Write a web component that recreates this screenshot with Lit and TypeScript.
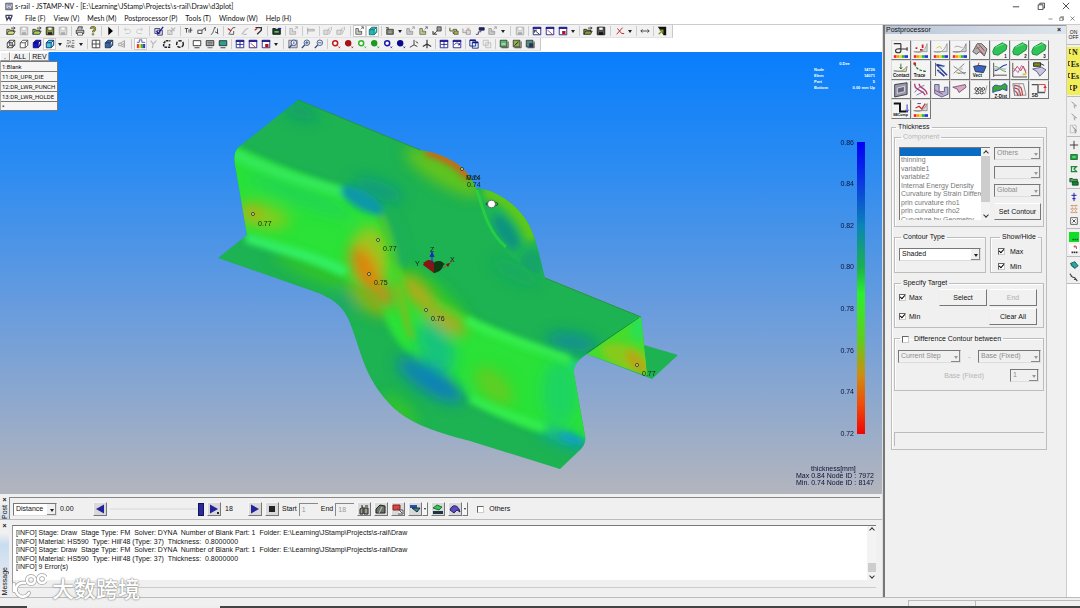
import { LitElement, html, svg, css, TemplateResult } from "lit";
import { customElement, property } from "lit/decorators.js";
import { classMap } from "lit/directives/class-map.js";

type Glyph = TemplateResult;

/* ---------- small 12x12 glyphs used by the tool bars ---------- */
const folder = (f: string, s = "#333") => svg`<path d="M1 10V4h3l1 1h4v2M1 10l2-4h8l-2 4z" fill=${f} stroke=${s}/><path d="M6 2.5h4M9 1l2 1.5L9 4" fill="none" stroke=${s}/>`;
const disk = (a: string, b: string) => svg`<path d="M1.5 1.5h9v9h-9z" fill=${a} stroke=${b}/><path d="M3.5 1.5h5v3.5h-5z" fill="#fff" stroke=${b} stroke-width=".6"/><path d="M3.5 7.5h5v3h-5z" fill=${b}/>`;
const cube = (f: string, s: string) => svg`<path d="M1.5 4.5h6v6h-6zM1.5 4.5l3-3h6l-3 3M10.500 1.500v6l-3 3" fill=${f} stroke=${s} stroke-linejoin="round"/>`;
const axisBall = (c: string, hollow = false) => svg`<circle cx="5" cy="5" r="3" fill=${hollow ? "#fff" : c} stroke=${c} stroke-width="1.800"/><path d="M9 9l2 2M11 9l-2 2" stroke=${c} stroke-width=".8"/>`;
const win = (mark: Glyph) => svg`<path d="M1.500 1.500h9v9h-9z" fill="#fff" stroke="#14148c"/><path d="M1 1.500h10v2H1z" fill="#14148c"/>${mark}`;
const lens = (s: string, mark: string) => svg`<circle cx="7" cy="4.500" r="3.300" fill="#eef" stroke=${s}/><path d="M4.500 7L1 11" stroke=${s} stroke-width="1.600"/><path d=${mark} stroke=${s}/>`;
const parts = (a: string, b: string) => svg`<path d="M1 3v7h7V6M1 3h3v4h4" fill=${a} stroke=${b}/><path d="M7 4l3-3M10 1H7.500M10 1v2.500" fill="none" stroke=${b}/>`;
const twin = (a: string, b: string) => svg`<path d="M1 5h5v5H1z" fill=${a} stroke=${b}/><path d="M8 2l-2 3 3 1-2 4M10 1v4" fill="none" stroke=${b}/>`;
const board = (a: string, extra: Glyph) => svg`<path d="M1.500 1.500h8v8h-8z" fill=${a} stroke="#333"/><path d="M3 10.500h8V3" fill="none" stroke="#333"/>${extra}`;
const curve = (s: string) => svg`<path d="M1 10c3 0 3-6 5-8M5 2h2M6 7l4 2M9 3v6" fill="none" stroke=${s}/>`;

const G: Record<string, Glyph> = {
  open: folder("#d7e27a"), openG: folder("#a9cf5b"), fold2: folder("#8c9a3a", "#222"),
  save: disk("#8a9a30", "#222"), saveOff: disk("#ddd", "#aaa"), saveDark: disk("#555", "#111"),
  print: svg`<path d="M3 4l1-3h5l-1 3M1.500 5h9v4h-9z" fill="#bbb" stroke="#333"/><path d="M3 8h6v3H3z" fill="#fff" stroke="#333" stroke-width=".8"/>`,
  help: svg`<path d="M3.500 3.500c0-3 5-3 5 0 0 2-2.500 2-2.500 4" fill="none" stroke="#443" stroke-width="2.600"/><path d="M3.500 3.500c0-3 5-3 5 0 0 2-2.500 2-2.500 4" fill="none" stroke="#d6d62a" stroke-width="1.200"/><circle cx="6" cy="10" r="1.200" fill="#b9b92a" stroke="#443" stroke-width=".5"/>`,
  play: svg`<path d="M4 1l5.500 5L4 11z" fill="#000"/>`,
  undo: svg`<path d="M3 4h5c3 0 3 5 0 5H4M5 2L2.500 4 5 6" fill="none" stroke="#c4c4c4"/>`,
  redo: svg`<path d="M9 4H4C1 4 1 9 4 9h4M7 2l2.500 2L7 6" fill="none" stroke="#c4c4c4"/>`,
  check: svg`<path d="M1 3h6v6H1zM4 5h6v6H4z" fill="#dde" stroke="#336"/><path d="M3 6l2 3 6-8" fill="none" stroke="#11119a" stroke-width="1.400"/>`,
  checkOff: svg`<path d="M1 5h5v5H1zM5 2l4 4M3 8l7-6" fill="none" stroke="#b5b5b5" stroke-width="1.300"/>`,
  n1: svg`<path d="M1 3h4M3 3v5M6 8V4M7 5h3M8 2v6" fill="none" stroke="#333"/>`,
  n2: svg`<path d="M1 9V5h5v4zM6 5l4-3v4" fill="none" stroke="#333"/>`,
  n3: curve("#333"),
  red1: svg`<path d="M2 10l5-8M7 2h3M3 10h5v-4" fill="none" stroke="#444"/><path d="M1 3l4 3" stroke="#c22" stroke-width="1.500"/>`,
  gray1: svg`<path d="M2 10l5-6 3-1M4 10h4" fill="none" stroke="#bbb" stroke-width="1.300"/>`,
  red2: svg`<path d="M3 2h7v3L5 10" fill="none" stroke="#333" stroke-width="1.600"/><path d="M2 5l3-2" stroke="#c22" stroke-width="1.500"/>`,
  green1: svg`<path d="M1 3h3l1 1h5v6H1z" fill="#2a3a2a" stroke="#111"/><path d="M3 7h5" stroke="#3ddc4a" stroke-width="2"/><path d="M7 3h4" stroke="#22a" stroke-width="1.500"/>`,
  off1: parts("#ddd", "#b0b0b0"), off2: svg`<path d="M2 2v8M2 4h8v2H2z" fill="#ddd" stroke="#aaa"/>`, off3: twin("#ddd", "#b0b0b0"),
  part: parts("#cfd4c4", "#555"), teal: cube("#22b7b7", "#0d6a6a"), mach: svg`<path d="M2 4h8v6H2zM1 2h3v2" fill="#777b62" stroke="#444"/><path d="M4 6h4M4 8h4" stroke="#ddd" stroke-width=".6"/>`,
  offParts: parts("#ccc", "#999"), oliv: parts("#c8d08a", "#666"), blk: svg`<path d="M6 1h5v5H6zM2 10l5-5M1 6v4h5" fill="#999" stroke="#444"/>`,
  yel: svg`<path d="M1 2v4h4V4h4v5H5V7" fill="#e5e27a" stroke="#444"/><path d="M6 6h5v4H6z" fill="#a3b04a" stroke="#444" stroke-width=".8"/>`,
  pink: svg`<path d="M1 3v5h5M5 5h5v5H5z" fill="#ddd" stroke="#999"/><path d="M6 2l3 3M9 2L6 5" stroke="#e08a8a"/>`,
  navy: svg`<path d="M5 2h6v3H5z" fill="#22228c" stroke="#223"/><path d="M1 10h3V7h3V5" fill="none" stroke="#335"/>`,
  winA: win(svg`<path d="M3 5l6 5M3 5h3M3 5v3" stroke="#222" fill="none"/>`),
  winB: win(svg`<path d="M3 5l6 5" stroke="#a33" fill="none"/>`),
  winC: win(svg`<path d="M5 6h4v4H5z" fill="#b11"/>`),
  winD: win(svg`<path d="M6 3v7M2 6.500h8" stroke="#14148c"/>`),
  winE: win(svg`<path d="M3 7c1-3 5-3 6 0M9 7V5M9 7H7" stroke="#14148c" fill="none"/>`),
  winF: svg`<path d="M1 1.500h7v7H1zM4 4h7v7H4z" fill="#dfe" stroke="#14148c"/><path d="M1 1.500h7M4 4h7" stroke="#14148c" stroke-width="2"/>`,
  winOff: svg`<path d="M1.500 1.500h6v6h-6zM4.500 4.500h6v6h-6z" fill="#eee" stroke="#bbb"/>`,
  redx: svg`<path d="M2 10l7-8M3 3l5 6M8 9h3" stroke="#c03030" stroke-width="1.200"/>`,
  lr: svg`<path d="M1 6h10M3 4L1 6l2 2M9 4l2 2-2 2" fill="none" stroke="#333"/>`,
  corner: svg`<path d="M1 1h10v10H8z" fill="#111"/><path d="M2 10l5-5M7 9V5H3" fill="none" stroke="#8a9a20" stroke-width="1.600"/>`,
  wire: svg`${cube("none", "#333")}<path d="M4.500 1.500v6h6M4.500 7.500l-3 3" fill="none" stroke="#333"/>`, wire2: cube("#fff", "#444"), blueCube: cube("#1414c8", "#08086a"), tealOn: cube("#3fd0cf", "#127"),
  slate: cube("#3a64a0", "#1c2f55"),
  sys: svg`<path d="M1 2h3M5 2v3M7 2h3M1 5h3M7 5h3M1 10V7M3 10V8h2v2M7 7v3h3M7 8h3" fill="none" stroke="#444" stroke-width=".9"/>`,
  grid: svg`<path d="M1.500 1.500h9v9h-9zM6 1v10M1 6h10" fill="#fff" stroke="#333"/>`,
  spk: svg`<path d="M2 5h2l5-3v8L4 8H2zM4 5l5 3M4 8l5-3" fill="none" stroke="#999"/>`,
  rainbow: svg`<path d="M1 6h2.500v5H1z" fill="#e33"/><path d="M3.500 6H6v5H3.500z" fill="#ec3"/><path d="M6 6h2.500v5H6z" fill="#3b4"/><path d="M8.500 6H11v5H8.500z" fill="#33d"/><path d="M1 4h3V1h3v3h4" fill="none" stroke="#44a"/>`,
  yoff: svg`<path d="M2 2l3 4 4-4M5 6l-1 5" fill="none" stroke="#b5b5b5" stroke-width="1.300"/>`,
  frame1: svg`<path d="M2 9V5l3-3h5M3 10h6V6" fill="none" stroke="#222" stroke-width="1.800" stroke-dasharray="3 1"/>`,
  frame2: svg`<circle cx="6" cy="6" r="4" fill="none" stroke="#222" stroke-width="1.800" stroke-dasharray="4 1.500"/>`,
  mon1: svg`<path d="M1.500 2h9v6h-9z" fill="#fff" stroke="#222"/><path d="M3 10.500h6" stroke="#222"/>`,
  mon2: svg`<path d="M1.500 2h9v6h-9z" fill="#bbb" stroke="#222"/><path d="M3 4h6M3 6h6M3 10.500h6" stroke="#555"/>`,
  mon3: svg`<path d="M1.500 2h9v6h-9z" fill="#29a08a" stroke="#223"/><path d="M3 10.500h6" stroke="#222"/>`,
  zoomA: svg`<path d="M1 1.500h10v9H1z" fill="#ccd" stroke="#667"/>${lens("#2a4a7a", "M7 3v3")}`,
  zoomP: lens("#2a4a7a", "M5 4.500h4M7 2.500v4"), zoomM: lens("#2a4a7a", "M5 4.500h4"),
  r1: axisBall("#c01818", true), r2: axisBall("#a81414"), g1: axisBall("#2ab52a", true), g2: axisBall("#1c9a1c"), b1: axisBall("#1818b0", true), b2: axisBall("#0c0c8a"),
  ax1: svg`<path d="M6 1v6L1 10M6 7l4 2M8 3l3 2" fill="none" stroke="#444" stroke-width="1.200"/>`,
  ax2: svg`<path d="M6 1v10M6 6L1 9M6 6l5 3" fill="none" stroke="#333" stroke-width="1.400"/>`,
  bd1: board("#59b76a", svg`<path d="M3 6h5" stroke="#fff"/>`),
  bd2: board("#8fae4a", svg`<path d="M3 8l5-5" stroke="#111"/>`),
  bd3: board("#4f8d86", svg`<path d="M5 5h5v5H5z" fill="#235"/>`),
  cur: svg`<path d="M3 2l6 5H6l1 3" fill="#ddd" stroke="#999"/>`,
  curBox: svg`<path d="M1.500 1.500h7v9h-7z" fill="#eee" stroke="#bbb"/><path d="M4 3l5 5H7l1 3" fill="#ccc" stroke="#888"/>`,
  plus: svg`<path d="M6 1v10M1 6h10" stroke="#222"/>`,
  gr1: svg`<path d="M2 3h8v6H2z" fill="#21a63c" stroke="#156b2a"/><path d="M4 6h4" stroke="#bfe"/>`,
  gr2: svg`<path d="M2 3h8M2 9h8M3 3v6M9 3L6 6l3 3" fill="none" stroke="#1b8a35" stroke-width="1.500"/>`,
  gr3: svg`<path d="M1 3h3l1 1h5v3H1z" fill="#4a5" stroke="#142"/><path d="M4 7h7v4H4z" fill="#183" stroke="#142"/>`,
  pin: svg`<path d="M6 1v10M3 4h6M4 8h4" stroke="#22a" stroke-width="1.200"/>`,
  rgrid: svg`<path d="M2 2h8M2 6h8M2 10h8" stroke="#c66" stroke-dasharray="2 1"/><path d="M4 1v10M8 1v10" stroke="#c93" stroke-dasharray="2 1"/>`,
  xb: svg`<path d="M2 2h8v8H2z" fill="#fff" stroke="#444"/><path d="M4 4l4 4M8 4L4 8" stroke="#333"/>`,
  lime: svg`<path d="M0 0h12v12H0z" fill="#10e020"/><path d="M4 9h7" stroke="#064" stroke-width="2" stroke-dasharray="2 .6"/>`,
  rback: svg`<path d="M0 0h12v12H0z" fill="#fff"/><path d="M8 1L6 3l2 2M6 3h3v3" fill="none" stroke="#c44"/><path d="M3 10h8" stroke="#333" stroke-width="2" stroke-dasharray="2 .6"/>`,
  tealB: svg`<path d="M2 4l5-2 4 5-4 3z" fill="#2aa5a5" stroke="#155"/><path d="M2 4l1 3 4 3" fill="#1b7" stroke="#155"/>`,
  sprl: svg`<path d="M1 2l3 4 3 1 3 4M2 5h2M6 9h2" fill="none" stroke="#444" stroke-width="1.300"/>`,
};

@customElement("tool-strip")
export class ToolStrip extends LitElement {
  @property() items = "";
  @property() label = "";
  static styles = css`
    :host { display: flex; }
    .strip { display: flex; align-items: center; height: 13px; padding: 0 4px; background: #f1f1f1; border-right: 1px solid #c9c9c9; border-bottom: 1px solid #e2e2e2; box-sizing: border-box; }
    button { all: unset; width: 13px; height: 12px; display: grid; place-items: center; }
    button.on { background: #fff; box-shadow: inset 0 0 0 1px #ccc; }
    svg { width: 10px; height: 10px; display: block; }
    .sep, .grip { width: 4px; height: 10px; box-sizing: border-box; background: linear-gradient(#ccc, #ccc) center / 1px 10px no-repeat; }
    .grip { width: 6px; }
    .more { width: 8px; }
    .more::before { content: ""; border: 2px solid transparent; border-top: 3px solid #222; border-bottom: 0; }
  `;
  render() {
    return html`<div class="strip" role="toolbar" aria-label=${this.label}>
      ${this.items.split(" ").map((k) =>
        k === "|" ? html`<span class="sep"></span>`
        : k === "||" ? html`<span class="grip"></span>`
        : k === "v" ? html`<button class="more" aria-label="More"></button>`
        : html`<button class=${classMap({ on: k.startsWith("*") })} aria-label=${k.replace("*", "")}><svg viewBox="0 0 12 12">${G[k.replace("*", "")]}</svg></button>`)}
    </div>`;
  }
}

/* ---------- 20x20 glyphs of the postprocessor palette ---------- */
const bar = svg`<path d="M2 16h3v3H2z" fill="#e22"/><path d="M5 16h3v3H5z" fill="#f90"/><path d="M8 16h3v3H8z" fill="#dd2"/><path d="M11 16h3v3h-3z" fill="#2b3"/><path d="M14 16h4v3h-4z" fill="#23d"/>`;
const cap = (t: string, x = 1, y = 18, cls = "cap") => svg`<text x=${x} y=${y} class=${cls}>${t}</text>`;
const slab = (n: string) => svg`<path d="M2 12l2-5 9-5 5 3-1 5-9 6-5-1z" fill="#2fc455" stroke="#15803a"/><path d="M5 7l10-4" stroke="#7be796"/>${cap(n, 15, 19)}`;
const P: Glyph[] = [
  svg`<path d="M2 3h8M10 3v8c0 3-6 3-6 0s4-2 9-2h4M17 7v4" fill="none" stroke="#333" stroke-width="1.300"/>${bar}`,
  svg`<path d="M2 12c7 2 12 1 15-9v9z" fill="#ddd" stroke="#999"/><path d="M4 8h2M9 10h3M12 4v4" stroke="#c22" stroke-width="2"/>${bar}`,
  svg`<path d="M2 12c8 2 11 0 15-9v9z" fill="#e8e8e8" stroke="#999"/><path d="M5 8l4-2 2 3" fill="none" stroke="#cc3"/>${bar}`,
  svg`<path d="M2 12c8 2 11 0 15-9v9z" fill="#d4d4dc" stroke="#888"/><path d="M4 7c4-3 6 1 9 0" fill="none" stroke="#999"/>${bar}`,
  svg`<path d="M2 12l5-9h5l6 6-3 8-5-5-4 3z" fill="#b9a9b0" stroke="#555"/><path d="M6 6l8 9M9 4l6 7" stroke="#a33"/><path d="M5 9l5-2" stroke="#3a6"/>`,
  slab("1"), slab("2"), slab("3"),
  svg`<path d="M2 11c7 2 11 0 15-5l-1 6z" fill="#dde08a" stroke="#888"/><path d="M10 3v6M8.500 7l1.500 2 1.500-2" fill="none" stroke="#262"/>${cap("Contact")}`,
  svg`<path d="M3 3c2 7 7 8 14 9" fill="none" stroke="#2a6a2a" stroke-width="1.500" stroke-dasharray="3 1.500"/><circle cx="3" cy="3" r="1.600" fill="#c22"/>${cap("Trace", 2)}`,
  svg`<path d="M4 2v15" stroke="#555"/><path d="M5 4l12 12M6 10l8 7M5 4l9 2" stroke="#2a3a9a" stroke-width="1.800"/><path d="M8 7l6-2M7 13l5-6" stroke="#8ab"/>`,
  svg`<path d="M3 14L15 3M3 6l13 9M8 14l9-1" stroke="#777"/><path d="M5 9l8-2v3z" fill="#ccc"/><path d="M6 13l4 1" stroke="#994"/>`,
  svg`<path d="M3 6l6-1 8 1-3 7-9-1z" fill="#3b63c0" stroke="#234"/><path d="M9 2l-1 3" stroke="#c22"/>${cap("Vect", 2)}`,
  svg`<path d="M3 2v16M3 16h15" stroke="#444"/><path d="M4 11c5 0 6-6 14-7" fill="none" stroke="#24a" stroke-width="1.300"/><path d="M4 6c5 0 8 6 13 6" fill="none" stroke="#4a4"/><path d="M3 9h14" stroke="#999"/>`,
  svg`<path d="M2 2v16h16" fill="none" stroke="#444"/><path d="M3 12l4-6 4 5 3-5 3 8" fill="none" stroke="#c33"/><path d="M3 8l5 5 4-8 5 6" fill="none" stroke="#a5a"/><path d="M13 15h4" stroke="#cc3" stroke-width="2"/>`,
  svg`<path d="M3 9l10-2 5 3-7 7-3-5z" fill="#cbc6e0" stroke="#558"/><path d="M4 2h8v4H4z" fill="#7a8a1a" stroke="#222"/><path d="M12 3l4 2" stroke="#222"/>`,
  svg`<path d="M3 4l14-2v13L3 18z" fill="#99a" stroke="#334"/><path d="M6 8l8-2v6l-8 2z" fill="#667" stroke="#dde"/>`,
  svg`<path d="M3 3c0 9 8 5 12 13M8 3c0 6 8 4 9 12" fill="none" stroke="#b33a6a" stroke-width="1.500"/><path d="M3 13c3-5 7-7 11-8M5 16l8-4" fill="none" stroke="#6a6ab5"/>`,
  svg`<path d="M3 4h5v8h6V7h4v8l-7 3-8-4z" fill="#b7b6d0" stroke="#558"/><path d="M3 10l9 5" stroke="#b35"/>`,
  svg`<path d="M2 7l14-3 1 3-8 6-2-4z" fill="#d9a9bd" stroke="#757"/>`,
  svg`<path d="M3 14h13l2-9" fill="none" stroke="#999"/><g fill="#fff" stroke="#333"><circle cx="6" cy="9" r="1.600"/><circle cx="10" cy="9" r="1.600"/><circle cx="7" cy="13" r="1.600"/><circle cx="12" cy="13" r="1.600"/><circle cx="14" cy="9" r="1.600"/></g>`,
  svg`<path d="M2 7c3-5 7 0 10-2s4-3 6 0v6l-5-2c-4 3-6 1-11 4z" fill="#3aa53a" stroke="#264a9a"/>${cap("Z-Dist", 4, 19)}`,
  svg`<path d="M2 3h12l3 13H4z" fill="#eee" stroke="#888"/><path d="M3 5c9 0 9 3 10 11M3 8c6 0 7 3 8 9M3 11c4 0 4 3 5 6" fill="none" stroke="#c23a3a" stroke-width="1.300"/><path d="M4 4v13M9 4v13" stroke="#88a"/>`,
  svg`<path d="M2 4h7v9h8" fill="none" stroke="#555" stroke-width="1.500"/><path d="M10 4h7v8" fill="none" stroke="#c33"/><path d="M15 8l2-3 2 3" fill="#c33"/>${cap("SB", 2)}`,
  svg`<path d="M2 4h7v9h7" fill="none" stroke="#111" stroke-width="2.200"/><path d="M17 5v8M15.500 11l1.500 3 1.500-3" fill="none" stroke="#22a"/>${cap("SBComp", 1, 18, "cap tiny")}`,
  svg`<path d="M2 12c8 2 11 0 15-8v8z" fill="#ddd" stroke="#888"/><path d="M4 9l4-2 3 3 4-6" fill="none" stroke="#c33" stroke-width="1.500"/><path d="M6 4h4" stroke="#33a"/>${bar}`,
];

/* ---------- shaded forming result ---------- */
const BODY = "M298 100L420 150C445 154 460 164 467 173C473 181 476 188 479 192C498 193 521 210 529 225C537 240 541 264 545 278L641 317L644 345L678 355L652 379L587 354C578 360 573 365 574 374L585 436C586 442 584 445 581 449L560 469L470 441C430 431 405 421 388 402C366 378 362 356 354 334C346 307 336 299 310 290L218 258L247 235L236 170C233 156 235 150 240 146Z";
const WALL = "M220 146L240 148C262 160 330 186 352 193C378 202 383 226 388 248C393 266 406 281 430 296C470 322 530 344 574 362L600 366L600 444L585 441C560 444 500 420 452 386C410 358 392 345 380 304C370 288 350 280 310 262L246 236L215 232Z";
const pins: [number, number, string, number, number][] = [
  [253, 214, "0.77", 258, 226], [378, 240, "0.77", 383, 251], [369, 274, "0.75", 374, 285],
  [426, 310, "0.76", 431, 321], [462, 169, "0.74", 467, 180], [637, 365, "0.77", 642, 376],
];

@customElement("result-view")
export class ResultView extends LitElement {
  static styles = css`
    :host { display: block; position: relative; min-height: 0; overflow: hidden; background: linear-gradient(#087efc, #2a8bf2 25%, #6c9ddc 60%, #b3b5bd 100%); font-family: "Liberation Sans", sans-serif; }
    .scene { position: absolute; inset: 0; width: 100%; height: 100%; }
    text { font-size: 7px; fill: #10201a; }
    .ink { fill: #0c1238; }
    .info { position: absolute; top: 9px; right: 7px; width: 61px; display: grid; grid-template-columns: 1fr auto; color: #fff; font-size: 4px; font-weight: bold; line-height: 6px; margin: 0; }
    .info dd { margin: 0; text-align: right; }
    .info .head { grid-column: 1 / 3; text-align: center; }
    .parts { position: absolute; top: 0; left: 0; width: 58px; display: grid; grid-template-columns: 10px 20px 19px; font-size: 7px; }
    .parts button { all: unset; box-sizing: border-box; height: 9px; line-height: 8px; text-align: center; background: #f0f0f0; border: 1px solid #999; border-top-color: #fff; border-left-color: #fff; }
    .parts ul { grid-column: 1 / 4; list-style: none; margin: 0; padding: 0; width: 58px; background: #f6f6f6; border: 1px solid #777; border-left-color: #aaa; box-sizing: border-box; overflow: hidden; }
    .parts li { height: 10px; line-height: 9px; box-sizing: border-box; border-bottom: 1px solid #777; white-space: nowrap; font-family: Roboto, sans-serif; font-size: 6px; padding-left: 1px; }
    .parts li:last-child { border: 0; height: 8px; }
  `;
  render() {
    const blob = (cx: number, cy: number, rx: number, ry: number, rot: number, c: string, o = 1) =>
      svg`<ellipse cx=${cx} cy=${cy} rx=${rx} ry=${ry} transform=${`rotate(${rot} ${cx} ${cy})`} fill=${c} opacity=${o}/>`;
    return html`
      <svg class="scene" viewBox="0 52 882 442" preserveAspectRatio="xMidYMid meet" role="img" aria-label="Thickness contour of s-rail">
        <defs>
          <filter id="b3" x="-20%" y="-20%" width="140%" height="140%"><feGaussianBlur stdDeviation="3"/></filter>
          <filter id="b7" x="-20%" y="-20%" width="140%" height="140%"><feGaussianBlur stdDeviation="7"/></filter>
          <clipPath id="body"><path d=${BODY}/></clipPath>
          <clipPath id="inner"><path d="M587 354L637 318L641 317L644 345L647 376Z"/></clipPath>
          <clipPath id="back"><path d="M476 188C500 190 522 210 529 225C537 240 541 264 545 278C520 267 505 252 496 240C486 224 483 205 476 188Z"/></clipPath>
          <linearGradient id="leg" x1="0" y1="0" x2="0" y2="1">
            <stop offset="0" stop-color="#0000f4"/><stop offset=".14" stop-color="#0c3ae0"/><stop offset=".29" stop-color="#0a86b4"/><stop offset=".43" stop-color="#1cb24c"/>
            <stop offset=".52" stop-color="#2cf02c"/><stop offset=".68" stop-color="#62cc1c"/><stop offset=".8" stop-color="#d08c10"/><stop offset=".9" stop-color="#f04c08"/><stop offset="1" stop-color="#f00404"/>
          </linearGradient>
        </defs>
        <path d=${BODY} fill="#1db252"/>
        <g clip-path="url(#body)">
          <g filter="url(#b7)">
            ${blob(300, 112, 18, 6, 20, "#0f9a72")}
            ${blob(444, 172, 44, 13, 30, "#62c41c")}
            ${blob(425, 305, 54, 24, 40, "#2fc82a")}
            ${blob(330, 276, 60, 10, 22, "#32c42c")}
            ${blob(370, 302, 26, 10, 28, "#7ab81a")}
            ${blob(400, 410, 22, 8, 40, "#34c628")}
            ${blob(345, 300, 14, 8, 40, "#12a66c")}
            ${blob(515, 272, 26, 8, 26, "#12a668", 0.7)}
          </g>
          <path d=${WALL} fill="#2ce238" filter="url(#b3)"/>
          <g filter="url(#b7)">
            ${blob(300, 196, 56, 8, 21, "#20d454")}
            ${blob(262, 216, 28, 12, 12, "#7ecf1c")}
            ${blob(252, 212, 12, 8, 12, "#b0b018")}
            ${blob(370, 258, 20, 32, 0, "#98c81c")}
            ${blob(366, 270, 11, 27, -26, "#e08010")}
            ${blob(384, 296, 10, 12, -30, "#c09014")}
            ${blob(418, 293, 10, 24, -44, "#b4a814")}
            ${blob(446, 320, 24, 9, 32, "#b0a818")}
            ${blob(436, 346, 16, 28, -28, "#16c47c")}
            ${blob(430, 380, 38, 13, 32, "#0a86b0")}
            ${blob(436, 384, 18, 8, 32, "#0a80b8")}
            ${blob(494, 386, 13, 24, -44, "#5ece20")}
            ${blob(560, 392, 18, 32, 0, "#1ed462")}
            ${blob(562, 438, 24, 6, 20, "#10a4b4")}
            ${blob(572, 342, 26, 8, 10, "#0a8c98")}
            ${blob(378, 190, 26, 9, 20, "#0f9c80")}
          </g>
          <g filter="url(#b3)">
            <path d="M232 153C280 176 315 184 346 193" fill="none" stroke="#34e85c" stroke-width="10"/>
            ${blob(362, 200, 24, 9, 30, "#0a98a8")}
            <path d="M384 210C400 224 404 246 402 266" fill="none" stroke="#1cb056" stroke-width="14"/>
            <path d="M380 216C390 234 394 262 408 322" fill="none" stroke="#50d024" stroke-width="6"/>
            <path d="M397 286C402 306 404 320 412 338" fill="none" stroke="#80bc1c" stroke-width="5"/>
            <path d="M246 238C290 252 318 258 346 272" fill="none" stroke="#34f068" stroke-width="9"/>
            <path d="M466 320C500 338 535 346 570 360" fill="none" stroke="#38f050" stroke-width="8"/>
            <path d="M470 398C492 410 515 418 545 428" fill="none" stroke="#34ee50" stroke-width="8"/>
            ${blob(576, 366, 7, 5, 0, "#1ad088")}
            ${blob(572, 439, 14, 4, 20, "#109cc8")}
            <path d="M426 151C446 156 460 164 470 178" fill="none" stroke="#d66014" stroke-width="9"/>
          </g>
        </g>
        <g clip-path="url(#back)">
          <path d="M470 180h80v100h-80z" fill="#1db456"/>
          <g filter="url(#b3)">
            <path d="M484 190C512 196 528 222 534 240" fill="none" stroke="#5cc81c" stroke-width="16"/>
            ${blob(506, 232, 20, 8, 56, "#0f9480")}
            ${blob(532, 264, 12, 14, 0, "#14a468")}
          </g>
        </g>
        <path d="M477 190C483 210 488 232 506 247" fill="none" stroke="#2cd83c" stroke-width="3" opacity=".7"/>
        <g clip-path="url(#inner)">
          <path d="M580 310h80v80h-80z" fill="#46dc2c"/>
          <g filter="url(#b3)">${blob(628, 358, 28, 12, 22, "#86ca1c")}${blob(636, 362, 14, 7, 50, "#b4a818")}${blob(638, 326, 8, 16, 0, "#2ae052")}</g>
        </g>
        <path d="M587 353L639 317.500" stroke="#128a3c" stroke-width="1"/>
        <path d="M545 278L641 317M298 100L420 150" fill="none" stroke="#2a9440" stroke-width="1"/>

        <path d="M423 262l11 11 0-8zM434 273l11-9-5-3-6 2z" fill="#123d10"/>
        <path d="M423 265c2-6 8-6 11-3v11z" fill="#8a1414"/>
        <path d="M434 273c6-1 10-5 9-10-3-3-8-2-9 0z" fill="#0c3a12"/>
        <path d="M432 264v-11M430 257l2-5 2 5" fill="#1a2ac0" stroke="#1a2ac0"/>
        <path d="M443 268l10-7" stroke="#b04a20"/><path d="M446 264l4-1-2 4z" fill="#701010"/>
        <text x="430" y="252">Z</text><text x="450" y="262">X</text><text x="415" y="266">Y</text>

        <ellipse cx="492" cy="204" rx="6" ry="2" fill="none" stroke="#222" stroke-width=".8"/>
        <ellipse cx="491.500" cy="204" rx="4" ry="3.800" fill="#fff" stroke="#333" stroke-width=".6"/>

        ${pins.map(([x, y, t, tx, ty]) => svg`<circle cx=${x} cy=${y} r="1.500" fill="#dfe8a0" stroke="#222" stroke-width=".8"/><text x=${tx} y=${ty}>${t}</text>`)}
        <text x="466" y="180">Max</text><text x="467" y="187">0.74</text>

        <path d="M857 142h8v292h-8z" fill="url(#leg)"/>
        ${["0.86", "0.84", "0.82", "0.80", "0.78", "0.76", "0.74", "0.72"].map((t, i) => svg`<text class="ink" text-anchor="end" x="854" y=${144.500 + i * 41.600}>${t}</text>`)}
        <text class="ink" x="811" y="471">thickness[mm]</text>
        <text class="ink" x="796" y="478">Max 0.84 Node ID :</text><text class="ink" text-anchor="end" x="874" y="478">7972</text>
        <text class="ink" x="796" y="485">Min. 0.74 Node ID :</text><text class="ink" text-anchor="end" x="874" y="485">8147</text>
      </svg>
      <dl class="info">
        <dt class="head">0.Dee</dt>
        <dt>Node</dt><dd>14726</dd><dt>Elem</dt><dd>14071</dd><dt>Part</dt><dd>5</dd><dt>Bottom</dt><dd>0.00 mm Up</dd>
      </dl>
      <div class="parts">
        <button>.</button><button>ALL</button><button>REV</button>
        <ul>${["1:Blank", "11:DR_UPR_DIE", "12:DR_LWR_PUNCH", "13:DR_LWR_HOLDE", "*"].map((t) => html`<li>${t}</li>`)}</ul>
      </div>`;
  }
}

const controls = css`
  * { box-sizing: border-box; }
  .combo { position: relative; display: flex; }
  .combo select { all: unset; box-sizing: border-box; width: 100%; height: 13px; line-height: 10px; padding: 0 10px 0 2px; background: #fff; border: 1px solid #777; border-right-color: #ddd; border-bottom-color: #ddd; white-space: nowrap; overflow: hidden; }
  .combo::after { content: ""; position: absolute; right: 3px; top: 6px; border: 2px solid transparent; border-top: 3px solid #222; border-bottom: 0; pointer-events: none; }
  .combo::before { content: ""; position: absolute; right: 1px; top: 1px; width: 8px; bottom: 1px; background: #f0f0f0; border-right: 1px solid #888; border-bottom: 1px solid #888; pointer-events: none; }
  .combo.off select { background: #f0f0f0; color: #8c8c8c; }
  .combo.off::after { border-top-color: #999; }
  .tick { display: flex; align-items: center; gap: 5px; height: 10px; }
  .tick input { appearance: none; margin: 0; width: 7px; height: 7px; background: #fff; border: 1px solid #666; border-right-color: #ccc; border-bottom-color: #ccc; display: grid; place-items: center; }
  .tick input:checked::before { content: ""; width: 4px; height: 2px; border-left: 1px solid #000; border-bottom: 1px solid #000; transform: translateY(-1px) rotate(-48deg); }
`;

@customElement("post-panel")
export class PostPanel extends LitElement {
  static styles = [controls, css`
    :host { display: block; background: #f0f0f0; border-left: 2px solid #777; font: 7px/8px "Liberation Sans", sans-serif; color: #111; min-height: 0; }
    header { display: flex; justify-content: space-between; align-items: center; height: 9px; padding: 0 5px 0 1px; background: linear-gradient(90deg, #b9c6d6, #dfe5ec); border-top: 1px solid #99a; }
    header button { all: unset; font-weight: bold; }
    .body { padding: 6px 19px 0 6px; }
    .palette { display: grid; grid-template-columns: repeat(8, 1fr); width: 158px; }
    .palette button { all: unset; box-sizing: border-box; aspect-ratio: 1; background: #f4f4f4; border-right: 1px solid #777; border-bottom: 1px solid #777; border-top: 1px solid #ddd; border-left: 1px solid #ddd; }
    .palette svg { display: block; width: 100%; height: 100%; }
    .cap { font: bold 5px "Liberation Sans", sans-serif; fill: #111; }
    .cap.tiny { font-size: 4px; }
    fieldset { margin: 0; padding: 0; border: 1px solid #bdbdbd; min-width: 0; box-shadow: inset 1px 1px 0 #fff; }
    legend { padding: 0 2px; margin-left: 2px; height: 8px; }
    .outer { margin-top: 4px; padding: 2px 2px 3px; }
    .off { color: #aaa; }
    .comp { display: grid; grid-template-columns: 91px 47px; gap: 4px; padding: 6px 0 4px 4px; height: 94px; color: #111; }
    .comp > legend { color: #b5b5b5; }
    .list { display: flex; height: 73px; overflow: hidden; background: #fff; border-left: 1px solid #777; border-top: 1px solid #777; }
    .list ul { list-style: none; margin: 0; padding: 0; flex: 1; min-width: 0; height: 76px; display: grid; grid-auto-rows: 1fr; overflow: hidden; color: #777; white-space: nowrap; }
    .list li { padding-left: 1px; overflow: hidden; }
    .list li.sel { background: #0a6bc4; }
    .bar { width: 9px; background: #f2f2f2; display: grid; grid-template-rows: 8px 46px 1fr 8px; }
    .bar i { background: #cdcdcd; }
    .bar b { display: grid; place-items: center; }
    .bar b::before { content: ""; width: 3px; height: 3px; border-left: 1px solid #333; border-top: 1px solid #333; transform: translateY(1px) rotate(45deg); }
    .bar b:last-child::before { transform: translateY(-1px) rotate(225deg); }
    .side { display: flex; flex-direction: column; justify-content: space-between; height: 73px; }
    .push { all: unset; box-sizing: border-box; height: 17px; line-height: 15px; text-align: center; border: 1px solid #777; border-left-color: #eee; border-top-color: #fff; background: #f1f1f1; }
    .push:disabled { color: #b0b0b0; }
    .pair { display: grid; grid-template-columns: 92px 52px; gap: 4px; margin-top: 6px; }
    .ctype { height: 40px; padding: 7px 4px 0; }
    .show { height: 40px; padding: 3px 7px 0; }
    .show .tick { height: 15px; }
    .target { display: grid; grid-template-columns: 38px 48px 48px; column-gap: 2px; row-gap: 2px; padding: 2px 3px 2px 4px; height: 49px; margin-top: 6px; }
    .target .tick { height: 17px; gap: 3px; }
    .target .last { grid-column: 3; }
    .diff { margin-top: 6px; height: 57px; padding: 8px 2px 0 3px; }
    .diff .row { display: flex; justify-content: space-between; gap: 6px; align-items: center; margin-bottom: 6px; }
    .diff .wide { width: 63px; }
    .diff .low { justify-content: flex-end; gap: 26px; padding-right: 2px; color: #b5b5b5; }
    .diff .short { width: 29px; }
    .note { height: 14px; margin-top: 41px; border-left: 1px solid #bbb; border-top: 1px solid #bbb; }
  `];
  combo(opt: string, label: string, cls = "off") {
    return html`<span class="combo ${cls}"><select aria-label=${label} ?disabled=${cls.includes("off")}><option>${opt}</option></select></span>`;
  }
  tick(label: string, on = true) {
    return html`<label class="tick"><input type="checkbox" ?checked=${on}>${label}</label>`;
  }
  render() {
    const rows = ["\u00a0", "thinning", "variable1", "variable2", "Internal Energy Density", "Curvature by Strain Differe", "prin curvature rho1", "prin curvature rho2", "Curvature by Geometry"];
    return html`
      <header><span>Postprocessor</span><button aria-label="Close">×</button></header>
      <div class="body">
        <div class="palette">${P.map((g, i) => html`<button aria-label=${"Result tool " + (i + 1)}><svg viewBox="0 0 20 20">${g}</svg></button>`)}</div>
        <fieldset class="outer">
          <legend>Thickness</legend>
          <fieldset class="comp">
            <legend>Component</legend>
            <div class="list">
              <ul role="listbox" aria-label="Component">${rows.map((r, i) => html`<li role="option" class=${classMap({ sel: i === 0 })}>${r}</li>`)}</ul>
              <div class="bar"><b></b><i></i><span></span><b></b></div>
            </div>
            <div class="side">
              ${this.combo("Others", "Group")}${this.combo("", "Sub item")}${this.combo("Global", "System")}
              <button class="push">Set Contour</button>
            </div>
          </fieldset>
          <div class="pair">
            <fieldset class="ctype"><legend>Contour Type</legend>${this.combo("Shaded", "Contour Type", "")}</fieldset>
            <fieldset class="show"><legend>Show/Hide</legend>${this.tick("Max")}${this.tick("Min")}</fieldset>
          </div>
          <fieldset class="target">
            <legend>Specify Target</legend>
            ${this.tick("Max")}<button class="push">Select</button><button class="push" disabled>End</button>
            ${this.tick("Min")}<button class="push last">Clear All</button>
          </fieldset>
          <fieldset class="diff">
            <legend>${this.tick("Difference Contour between", false)}</legend>
            <div class="row">${this.combo("Current Step", "Left step", "off wide")}<span class="off">-</span>${this.combo("Base (Fixed)", "Right step", "off wide")}</div>
            <div class="row low"><span>Base (Fixed)</span>${this.combo("1", "Base step", "off short")}</div>
          </fieldset>
          <div class="note"></div>
        </fieldset>
      </div>`;
  }
}

@customElement("side-tools")
export class SideTools extends LitElement {
  static styles = css`
    :host { display: block; background: #fff; border-left: 1px solid #ccc; overflow: hidden; font: 6px/6px "Liberation Sans", sans-serif; }
    .col { background: #f0f0f0; border-bottom: 1px solid #bbb; padding-top: 2px; }
    button { all: unset; display: grid; place-items: center; height: 12px; width: 100%; }
    .sw { height: 16px; font-size: 5px; line-height: 5px; text-align: center; }
    .y { display: flex; align-items: center; justify-content: center; background: #f2ee5a; font: bold 8px/12px "Liberation Serif", serif; color: #222; }
    .y::before { content: ""; width: 2px; height: 5px; border: 1px solid #554; border-right: 0; margin: -3px 1px 0 0; box-sizing: border-box; }
    hr { border: 0; border-top: 1px solid #bbb; margin: 1px 0 2px; }
    svg { width: 10px; height: 10px; display: block; }
  `;
  render() {
    const group = (keys: string[]) => keys.map((k) => html`<button aria-label=${k}><svg viewBox="0 0 12 12">${G[k]}</svg></button>`);
    return html`<div class="col" role="toolbar" aria-label="Selection">
      <button class="sw"><span>ON<br>OFF</span></button><hr>
      ${["N", "Es", "Es", "P"].map((t) => html`<button class="y">${t}</button>`)}<hr>
      ${group(["cur", "cur", "curBox"])}<hr>
      ${group(["plus", "gr1", "gr2", "gr3"])}<hr>
      ${group(["pin", "rgrid", "xb"])}<hr>
      ${group(["lime", "rback"])}<hr>
      ${group(["tealB", "sprl"])}
    </div>`;
  }
}

@customElement("play-bar")
export class PlayBar extends LitElement {
  static styles = [controls, css`
    :host { display: grid; grid-template-columns: 9px 1fr; height: 26px; background: #f0f0f0; font: 7px/8px "Liberation Sans", sans-serif; color: #111; border-bottom: 1px solid #bbb; padding-top: 3px; box-sizing: border-box; }
    .tab { display: flex; flex-direction: column; align-items: center; justify-content: space-between; line-height: 6px; background: linear-gradient(#f0f0f0 25%, #cddcec); }
    .tab span { writing-mode: vertical-rl; transform: rotate(180deg); }
    .row { display: flex; align-items: center; gap: 3px; border: 1px solid #888; border-bottom: 0; border-right: 0; margin-right: 2px; padding: 1px 3px 0; }
    .row .combo { width: 44px; }
    .num { width: 30px; }
    .n18 { width: 21px; padding-left: 1px; }
    .key { all: unset; display: grid; place-items: center; width: 14px; height: 14px; background: #d9d9d9; border: 1px solid #777; border-top-color: #f5f5f5; border-left-color: #f5f5f5; box-sizing: border-box; }
    .key svg { width: 12px; height: 12px; }
    .drop { width: 6px; margin-left: -3px; background: #f4f4f4; }
    .drop::before { content: ""; border: 1px solid transparent; border-top: 2px solid #222; border-bottom: 0; }
    input[type="range"] { appearance: none; margin: 0; width: 94px; height: 14px; background: linear-gradient(#e4e4e4, #e4e4e4) center / 100% 2px no-repeat; }
    input[type="range"]::-webkit-slider-thumb { appearance: none; width: 6px; height: 13px; background: #2b2b9c; border: 1px solid #14145c; }
    .box { all: unset; box-sizing: border-box; width: 19px; height: 13px; padding-left: 2px; color: #999; border-left: 1px solid #888; border-top: 1px solid #888; }
    .field { display: flex; align-items: center; gap: 2px; }
    .others { margin-left: 6px; }
  `];
  render() {
    const k = (g: Glyph, label: string) => html`<button class="key" aria-label=${label}><svg viewBox="0 0 12 12">${g}</svg></button>`;
    const fwd = svg`<path d="M2 1.500L10 6l-8 4.500z" fill="#23239a"/>`;
    const people = svg`<path d="M2 11V6l3-2v7zM6 11V5h4v6zM3 3h2M7 3h3" fill="#9a9a8c" stroke="#222"/>`;
    return html`
      <div class="tab"><b>×</b><span>Post</span></div>
      <div class="row">
        <span class="combo"><select aria-label="Mode"><option>Distance</option></select></span>
        <span class="num">0.00</span>
        ${k(svg`<path d="M10 1.500L2 6l8 4.500z" fill="#23239a"/>`, "Back")}
        <input type="range" aria-label="Frame" min="0" max="18" value="18">
        ${k(svg`${fwd}<path d="M9 9h2v2H9z" fill="#222"/>`, "Step")}
        <span class="n18">18</span>
        ${k(fwd, "Play")}${k(svg`<path d="M3 3h6v6H3z" fill="#222"/>`, "Stop")}
        <label class="field">Start<input class="box" value="1"></label>
        <label class="field">End<input class="box" value="18"></label>
        ${k(people, "Views")}
        ${k(svg`<path d="M1 10V6l4-4 5 1v7z" fill="#6a7468" stroke="#222"/><path d="M4 10l3-6" stroke="#bcc"/>`, "Camera")}
        ${k(svg`<path d="M1 2h7v5H1z" fill="#d44" stroke="#822"/><path d="M5 5l5 5M8 7h3v4H6" fill="#eee" stroke="#555"/>`, "Clear")}
        ${k(svg`<path d="M1 2h7v3H1z" fill="#25a"/><path d="M3 5h8L8 9z" fill="#2a9a6a" stroke="#225"/>`, "Section")}
        <button class="key drop" aria-label="Section options"></button>
        ${k(svg`<path d="M1 5l4-3 5 2-3 3z" fill="#39c455" stroke="#173"/><path d="M1 8h10v3H1z" fill="#234"/>`, "Overlay")}
        ${k(svg`<path d="M1 7c2-6 7-5 9-1l1 3-3-2-3 3z" fill="#5a4ac0" stroke="#226"/>`, "Bend")}
        <button class="key drop" aria-label="Bend options"></button>
        <label class="tick others"><input type="checkbox">Others</label>
      </div>`;
  }
}

@customElement("message-log")
export class MessageLog extends LitElement {
  static styles = css`
    :host { position: relative; z-index: 1; display: grid; grid-template-columns: 9px 1fr; height: 77px; background: #f0f0f0; font: 7px/8px "Liberation Sans", sans-serif; color: #111; box-sizing: border-box; padding-top: 2px; }
    .tab { display: flex; flex-direction: column; align-items: center; justify-content: space-between; padding-bottom: 2px; line-height: 8px; background: linear-gradient(#f0f0f0 15%, #c9dcf0 30%, #f0f0f0); }
    .tab span { writing-mode: vertical-rl; transform: rotate(180deg); }
    .pane { display: grid; grid-template-columns: 1fr 9px; grid-template-rows: 54px 1fr; margin: 3px 6px 9px 3px; border-top: 1px solid #777; border-left: 1px solid #999; border-bottom: 1px solid #ccc; }
    .lines { background: #fff; white-space: pre; overflow: hidden; padding: 3px 3px 1px; }
    .lines div { display: grid; grid-auto-rows: 1fr; height: 43px; }
    .scroll { background: #f3f3f3; display: grid; grid-template-rows: 8px 1fr 9px 8px; place-items: center; }
    .scroll i { width: 8px; height: 9px; background: #cdcdcd; grid-row: 3; }
    .scroll b { width: 3px; height: 3px; border-left: 1px solid #333; border-top: 1px solid #333; transform: rotate(45deg); }
    .scroll b:last-child { grid-row: 4; transform: rotate(225deg); }
    .mark { position: absolute; left: 11px; bottom: -4px; display: flex; align-items: center; gap: 5px; color: #fff; font: 500 22px/26px "Noto Sans CJK SC", sans-serif; text-shadow: 0 0 2px #777, 0 0 1px #888; }
    .mark svg { width: 36px; height: 28px; }
  `;
  render() {
    const a = "[INFO] Stage: Draw  Stage Type: FM  Solver: DYNA  Number of Blank Part: 1  Folder: E:\\Learning\\JStamp\\Projects\\s-rail\\Draw";
    const b = "[INFO] Material: HS590  Type: Hill'48 (Type: 37)  Thickness:  0.8000000";
    const ring = "M18 20a7 7 0 1 1-4-10M3 11v7";
    return html`
      <div class="tab"><b>×</b><span>Message</span></div>
      <div class="pane">
        <div class="lines" role="log"><div>${[a, b, a, b, "[INFO] 9 Error(s)"].map((t) => html`<span>${t}</span>`)}</div></div>
        <div class="scroll"><b></b><i></i><b></b></div>
      </div>
      <div class="mark">
        <svg viewBox="0 0 36 28" fill="none">
          <g stroke="#a6a6a6" stroke-width="4" stroke-linecap="round"><path d=${ring}/><circle cx="20" cy="7" r="4"/><circle cx="31" cy="6" r="4"/></g>
          <g stroke="#fff" stroke-width="2.500" stroke-linecap="round"><path d=${ring}/><circle cx="20" cy="7" r="4"/><circle cx="31" cy="6" r="4"/></g>
        </svg><span>大数跨境</span>
      </div>`;
  }
}

@customElement("app-root")
export class AppRoot extends LitElement {
  static styles = css`
    :host { display: grid; height: 100vh; grid-template: auto 1fr auto / 1fr 183px 14px; background: #fff; font: 7px/12px Lato, sans-serif; color: #111; overflow: hidden; }
    .top { grid-column: 1 / 4; height: 25px; border-bottom: 1px solid #ccc; box-sizing: border-box; }
    .title { display: flex; align-items: center; height: 12px; padding: 0 10px 0 5px; gap: 2px; }
    .title svg { width: 8px; height: 9px; }
    .title span { flex: 1; }
    .keys { display: flex; gap: 17px; }
    .keys button, .mdi button { all: unset; display: grid; }
    .keys svg { width: 8px; height: 8px; }
    nav { display: flex; align-items: center; height: 12px; padding: 0 5px; gap: 8px; }
    nav a { color: inherit; text-decoration: none; }
    nav .doc { width: 8px; height: 8px; margin-right: 4px; }
    .mdi { display: flex; gap: 6px; margin-left: auto; }
    .mdi svg { width: 5px; height: 5px; }
    main { display: flex; flex-direction: column; min-width: 0; min-height: 0; border-right: 1px solid #ddd; }
    result-view { flex: 1; margin-top: 1px; }
    footer { grid-column: 1 / 4; height: 11px; background: #f0f0f0; border-top: 1px solid #bbb; border-bottom: 2px solid #444; box-sizing: border-box; display: grid; grid-template-columns: 1fr 67px 105px; position: relative; }
    footer span { border-left: 1px solid #bbb; border-top: 1px solid #bbb; margin-top: 2px; }
    footer span:first-child { border: 0; }
    footer::after { content: ""; position: absolute; left: 27px; width: 193px; height: 2px; bottom: -2px; background: #eee; }
  `;
  render() {
    const logo = svg`<path d="M1 1h10v10H1z" fill="#8b93a8" stroke="#445"/><path d="M3 3v5l3-3 2 3 2-5" fill="none" stroke="#fff"/>`;
    const keys = [svg`<path d="M1 6h8" stroke="#222"/>`, svg`<path d="M1.500 3.500h6v6h-6zM3.500 3V1.500h6v6H8" fill="none" stroke="#222"/>`, svg`<path d="M1 1l8 8M9 1L1 9" stroke="#222"/>`];
    const names = ["Minimize", "Restore", "Close"];
    return html`
      <div class="top">
        <div class="title"><svg viewBox="0 0 12 12">${logo}</svg><span>s-rail - JSTAMP-NV - [E:\\Learning\\JStamp\\Projects\\s-rail\\Draw\\d3plot]</span>
          <div class="keys">${keys.map((g, i) => html`<button aria-label=${names[i]}><svg viewBox="0 0 10 10">${g}</svg></button>`)}</div></div>
        <nav><svg class="doc" viewBox="0 0 12 12"><path d="M1 2l2 7 3-5 2 5 3-7M1 2h10" fill="none" stroke="#446" stroke-width="2"/></svg>
          ${["File (F)", "View (V)", "Mesh (M)", "Postprocessor (P)", "Tools (T)", "Window (W)", "Help (H)"].map((t) => html`<a href="#">${t}</a>`)}
          <div class="mdi">${keys.map((g, i) => html`<button aria-label=${names[i] + " view"}><svg viewBox="0 0 10 10">${g}</svg></button>`)}</div></nav>
      </div>
      <main>
        <tool-strip label="Main" items="open saveOff openG save saveOff | print help | play | undo redo || check checkOff | n1 n2 n3 | red1 gray1 red2 || green1 | off1 | off2 | off3 off3 || *part *teal | mach v offParts oliv blk | yel pink navy offParts v || saveOff | winA winB winC v | fold2 saveDark || redx v | lr | corner"></tool-strip>
        <tool-strip label="View" items="wire wire2 blueCube *tealOn v sys v | grid slate spk || *rainbow yoff frame1 frame2 | mon1 mon2 mon3 | winD winB winC v || zoomA zoomP zoomM | r1 r2 g1 g2 b1 b2 ax1 ax2 | winD winE | winF winOff | bd1 bd2 bd3"></tool-strip>
        <result-view></result-view>
        <play-bar></play-bar>
        <message-log></message-log>
      </main>
      <post-panel></post-panel>
      <side-tools></side-tools>
      <footer><span></span><span></span><span></span></footer>`;
  }
}
